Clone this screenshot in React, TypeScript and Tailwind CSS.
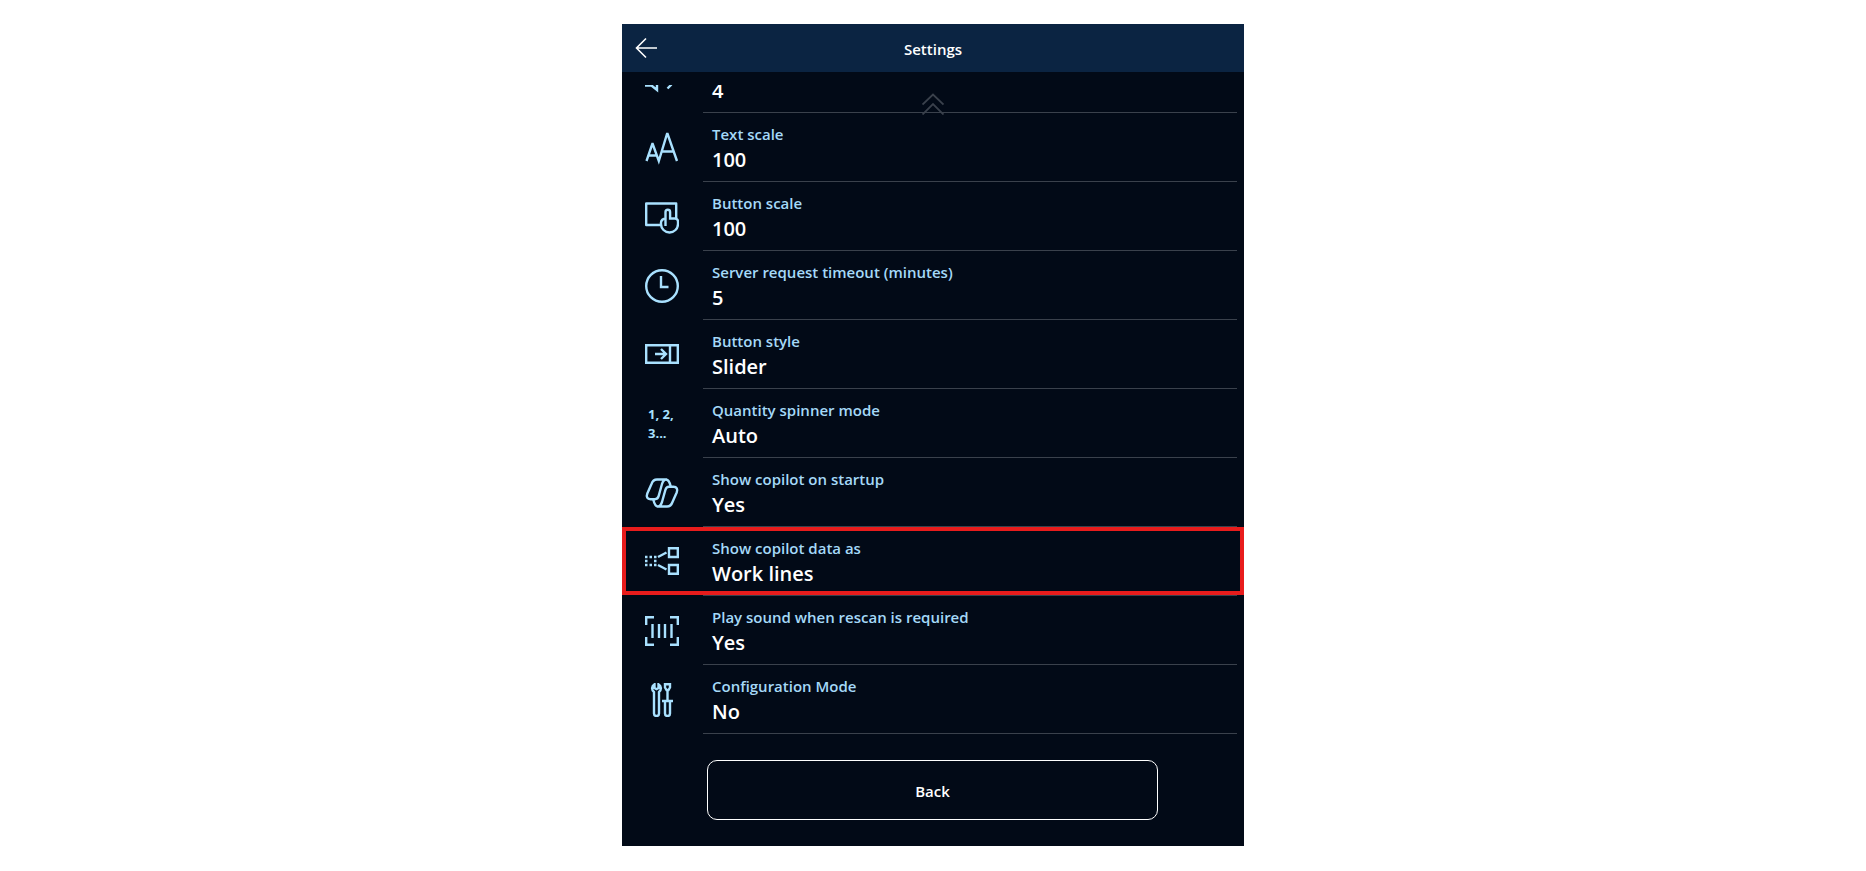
import React from "react";

function Icon({ children }: { children?: React.ReactNode }) {
  return (
    <svg
      width="34"
      height="34"
      viewBox="0 0 34 34"
      fill="none"
      stroke="currentColor"
      strokeWidth="2.4"
      aria-hidden="true"
    >
      {children}
    </svg>
  );
}

const SoundIcon = () => (
  <Icon>
    <path d="M0 23.500h6.500l5.500 4.500V6l-5.500 4.500H0M26.500 22.500 22.500 26.500" />
  </Icon>
);

const TextScaleIcon = () => (
  <Icon>
    <path d="M1.500 30 7.300 13h.4L13.800 30 22 3h.6L32 30M3.500 24.500h8.500M17 20.500h12" />
  </Icon>
);

const TouchIcon = () => (
  <Icon>
    <path d="M16 25H1.200V3.500h30V18" strokeLinejoin="round" />
    <path d="M20.500 26V12a2.300 2.300 0 0 1 4.600 0v6.500H30a3 3 0 0 1 3 3v2.500a8.500 8.500 0 0 1-17 0v-1.500c0-2 2-4 4.500-4" />
  </Icon>
);

const ClockIcon = () => (
  <Icon>
    <circle cx="17" cy="17" r="15.800" />
    <path d="M16 7v11h7.500" />
  </Icon>
);

const SliderIcon = () => (
  <Icon>
    <path d="M1.200 7.200h31.600v17.600H1.200zM25 7v18M10 16h11M16 11l5 5-5 5" />
  </Icon>
);

const copilotLobe =
  "M22 3.500H12C9 3.500 7.500 5 6.500 8L2.300 17.500c-1.300 3.500 0 5.700 3.200 5.700H10c2 0 3-1 3.600-3L17 8c1-3 2-4.500 4-4.500 2.800 0 3.700 2.500 4.700 7";

const CopilotIcon = () => (
  <Icon>
    <path d={copilotLobe} />
    <path d={copilotLobe} transform="rotate(180 17 17)" />
  </Icon>
);

const DataIcon = () => (
  <Icon>
    <path d="M24 3.200h8.800V12H24zM24 20h8.800v8.800H24zM13 12l8.500-4.500M13 20l8.500 4.500" />
    <path d="M0 12h12M0 20h12" strokeDasharray="2.500 2" />
    <path d="M0 16h2.500M9 16h2.500" />
  </Icon>
);

const ScanIcon = () => (
  <Icon>
    <path d="M1.200 11V3.200H9M25 3.200h7.800V11M32.800 23v7.800H25M9 30.800H1.200V23M7.500 10v14M14 10v14M20 10v14M26.500 10v14" />
  </Icon>
);

const ToolsIcon = () => (
  <Icon>
    <path d="M9.500 1.200A4.600 4.600 0 0 0 9 9v21.500a2.500 2.500 0 0 0 5 0V9a4.600 4.600 0 0 0-.5-7.800V5l-2 1.200-2-1.200z" />
    <path d="M20 1.200h5v3.300L23.500 7h-2L20 4.500zM22.500 7v11M17 18h11M20 18v12.500a2.500 2.500 0 0 0 5 0V18" />
  </Icon>
);

const CountIcon = () => (
  <span className="block w-[34px] pl-[3px] text-[13px] leading-[19px] font-bold">
    1, 2,
    <br />
    3...
  </span>
);

type Setting = {
  label?: string;
  value: string;
  icon: React.ReactNode;
  highlighted?: boolean;
};

const settings: Setting[] = [
  { value: "4", icon: <SoundIcon /> },
  { label: "Text scale", value: "100", icon: <TextScaleIcon /> },
  { label: "Button scale", value: "100", icon: <TouchIcon /> },
  { label: "Server request timeout (minutes)", value: "5", icon: <ClockIcon /> },
  { label: "Button style", value: "Slider", icon: <SliderIcon /> },
  { label: "Quantity spinner mode", value: "Auto", icon: <CountIcon /> },
  { label: "Show copilot on startup", value: "Yes", icon: <CopilotIcon /> },
  { label: "Show copilot data as", value: "Work lines", icon: <DataIcon />, highlighted: true },
  { label: "Play sound when rescan is required", value: "Yes", icon: <ScanIcon /> },
  { label: "Configuration Mode", value: "No", icon: <ToolsIcon /> },
];

function SettingRow({ label, value, icon, highlighted }: Setting) {
  return (
    <li className={label ? "flex" : "flex h-7 items-end overflow-hidden"}>
      <button type="button" className="relative flex w-full text-left">
        <span className="flex h-[69px] w-[81px] shrink-0 items-center justify-center pt-px pr-px text-[#a9e1ff]">
          {icon}
        </span>
        <span className="mr-[7px] flex flex-1 flex-col border-b border-[#3a414c] pt-[9px] pl-[9px]">
          <span className="h-6 text-[15px] leading-6 font-semibold text-[#a5d9f8]">{label}</span>
          <span className="text-xl leading-7 font-semibold">{value}</span>
        </span>
        {highlighted && (
          <span className="absolute inset-x-0 top-0 bottom-px border-4 border-[#e81c1c]" />
        )}
      </button>
    </li>
  );
}

export default function App() {
  return (
    <main className="mx-auto w-full max-w-[622px] py-6 font-['Open_Sans','Noto_Sans',sans-serif]">
      <div className="bg-[#020a17] pb-[26px] text-white">
        <header className="grid h-12 grid-cols-[48px_1fr_48px] items-center bg-[#0b2442]">
          <button type="button" aria-label="Go back" className="flex justify-center">
            <svg width="24" height="24" fill="none" stroke="white" strokeWidth="1.600">
              <path d="M12 2.500 2.500 12l9.500 9.500M2.500 12H23" />
            </svg>
          </button>
          <h1 className="pt-0.5 text-center text-[15px] font-semibold">Settings</h1>
        </header>
        <div className="relative pt-[13px]">
          <ul>
            {settings.map((s, i) => (
              <SettingRow key={i} {...s} />
            ))}
          </ul>
          <svg
            className="pointer-events-none absolute inset-x-0 top-[21px] mx-auto text-[#3a414c]"
            width="22"
            height="22"
            fill="none"
            stroke="currentColor"
            strokeWidth="1.800"
            aria-hidden="true"
          >
            <path d="M.5 11.500 11 1.500l10.500 10M.5 21.500 11 11l10.500 10.500" />
          </svg>
        </div>
        <div className="pt-[26px] pr-[86px] pl-[85px]">
          <button
            type="button"
            className="h-[60px] w-full rounded-[10px] border border-white pt-0.5 text-[15px] font-semibold"
          >
            Back
          </button>
        </div>
      </div>
    </main>
  );
}
